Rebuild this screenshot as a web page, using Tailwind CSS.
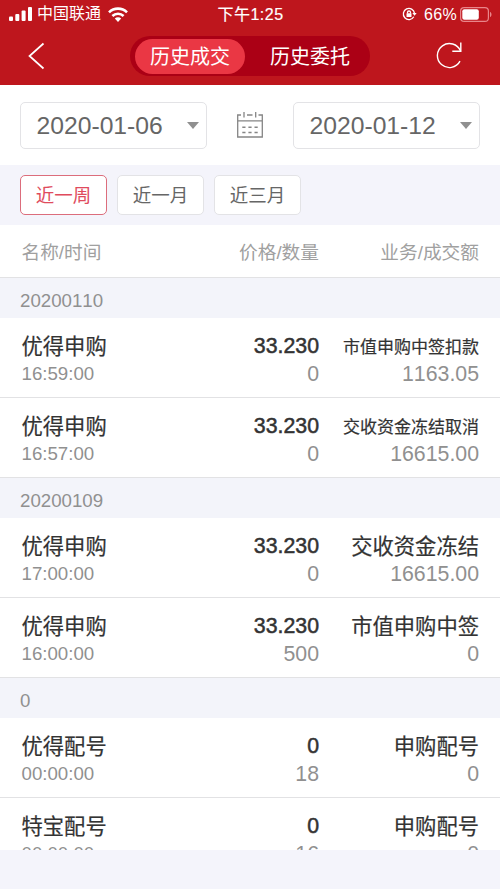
<!DOCTYPE html>
<html lang="zh-CN">
<head>
  <meta charset="UTF-8">
  <meta name="viewport" content="width=device-width, initial-scale=1.0">
  <title>历史成交</title>
  <script src="https://cdn.jsdelivr.net/npm/@tailwindcss/browser@4"></script>
</head>
<body class="h-[889px] overflow-hidden bg-[#f4f4fb] font-['Liberation_Sans','Noto_Sans_CJK_SC',sans-serif] text-[#333] [font-kerning:none]">

  <header class="h-[85px] bg-[#be161d] text-white">
    <!-- Status bar -->
    <div class="grid h-[28px] grid-cols-[1fr_auto_1fr] items-center pl-[9px] pr-2 text-base">
      <div class="flex items-center">
        <svg class="h-[15px] w-[23px]" viewBox="0 0 23 15" fill="currentColor">
          <rect x="0" y="9.500" width="4" height="4.500" rx="1"/>
          <rect x="6.300" y="7" width="4" height="7" rx="1"/>
          <rect x="12.600" y="3.500" width="4" height="10.500" rx="1"/>
          <rect x="19" y="0" width="4" height="14" rx="1"/>
        </svg>
        <span class="ml-[5px]">中国联通</span>
        <svg class="ml-[7px] h-[15px] w-5" viewBox="0 0 20 15" fill="none" stroke="currentColor" stroke-width="2.600">
          <path d="M1 5.300a12.800 12.800 0 0 1 18 0"/>
          <path d="M4.400 9a8 8 0 0 1 11.200 0"/>
          <path d="M10 15l-3.200-3.400a4.600 4.600 0 0 1 6.400 0z" fill="currentColor" stroke="none"/>
        </svg>
      </div>
      <span class="pt-px tracking-[0.500px] [-webkit-text-stroke:0.2px_#fff]">下午1:25</span>
      <div class="flex items-center justify-end">
        <svg class="h-[14px] w-[15px]" viewBox="0 0 15 14" fill="none" stroke="currentColor" stroke-width="1.300">
          <path d="M11.800 9.800a5.600 5.600 0 1 1 .7-3.500"/>
          <path d="M10.300 6h4.400l-2.200 2.800z" fill="currentColor" stroke="none"/>
          <rect x="4.500" y="6.300" width="5" height="3.700" rx=".5" fill="currentColor" stroke="none"/>
          <path d="M5.500 6.500v-1a1.500 1.500 0 0 1 3 0v1"/>
        </svg>
        <span class="ml-[7px] pt-px tracking-[0.300px]">66%</span>
        <svg class="ml-[3px] h-[15px] w-8" viewBox="0 0 32 15">
          <rect x=".6" y=".6" width="27.800" height="13.800" rx="3.500" fill="none" stroke="#e9858a" stroke-width="1.200"/>
          <rect x="2.300" y="2.300" width="16.500" height="10.400" rx="2" fill="#fff"/>
          <path d="M30 5c2 .5 2 4.500 0 5z" fill="#e9858a"/>
        </svg>
      </div>
    </div>

    <!-- Nav bar -->
    <div class="flex h-[56px] items-center pl-7">
      <svg class="h-[28px] w-[17px]" viewBox="0 0 17 28" fill="none" stroke="currentColor" stroke-width="1.700">
        <path d="M15.500 1.500L1.500 14l14 12.500"/>
      </svg>
      <div class="ml-[85px] flex h-10 w-[240px] items-center rounded-full bg-[#ab0015] pl-[5px] text-xl">
        <div class="flex h-[35px] w-[110px] items-center justify-center rounded-full bg-[#ea3744] pt-px">历史成交</div>
        <div class="ml-[10px] flex w-[110px] justify-center pt-px">历史委托</div>
      </div>
      <svg class="ml-[66px] h-[28px] w-[27px]" viewBox="0 0 27 28" fill="none" stroke="currentColor" stroke-width="1.400">
        <path d="M24 19.200A12 12 0 1 1 24.500 9"/>
        <path d="M24.800 .5v8.700h-8.500"/>
      </svg>
    </div>
  </header>

  <!-- Date range -->
  <div class="flex h-20 items-center justify-between bg-white px-5 text-[24.700px] text-[#666]">
    <div class="flex h-[47px] w-[187px] items-center justify-between rounded-[5px] border border-[#e3e3e6] pl-[15.500px] pr-[7px]">
      <span class="pt-0.5">2020-01-06</span>
      <svg class="h-[7px] w-3" viewBox="0 0 12 7" fill="#909090"><path d="M0 0h12L6 7z"/></svg>
    </div>
    <svg class="h-7 w-7" viewBox="0 0 28 28" fill="none" stroke="#858585" stroke-width="1.300">
      <path d="M5 4H1.700v22h24.600V4H22.500M11 4h5.500M1.700 9.800h24.600M8 1v5.500M19.700 1v5.500"/>
      <path d="M6.300 16.300h3.200M12.400 16.300h3.200M18.500 16.300h3.200M6.300 21.500h3.200M12.400 21.500h3.200M18.500 21.500h3.200" stroke-width="1.500"/>
    </svg>
    <div class="flex h-[47px] w-[187px] items-center justify-between rounded-[5px] border border-[#e3e3e6] pl-[15.500px] pr-[7px]">
      <span class="pt-0.5">2020-01-12</span>
      <svg class="h-[7px] w-3" viewBox="0 0 12 7" fill="#909090"><path d="M0 0h12L6 7z"/></svg>
    </div>
  </div>

  <!-- Quick ranges -->
  <div class="flex h-[60px] items-center gap-[10px] px-5 text-[18.500px] text-[#666]">
    <div class="flex h-10 w-[87px] items-center justify-center rounded-[5px] border border-[#dc6d7c] bg-white pt-0.5 text-[#e04b5d]">近一周</div>
    <div class="flex h-10 w-[87px] items-center justify-center rounded-[5px] border border-[#e3e3e6] bg-white pt-0.5">近一月</div>
    <div class="flex h-10 w-[87px] items-center justify-center rounded-[5px] border border-[#e3e3e6] bg-white pt-0.5">近三月</div>
  </div>

  <div class="grid h-[53px] grid-cols-[1fr_130px_160px] items-center border-b border-[#e2e2e4] bg-white pl-[21.500px] pr-[21px] pt-[5px] text-[18.700px] text-[#a0a0a0]">
    <span>名称/时间</span>
    <span class="text-right">价格/数量</span>
    <span class="text-right">业务/成交额</span>
  </div>

  <main id="records" class="h-[572px] overflow-hidden bg-white"></main>

<script>
const groups = [
  { date: '20200110', rows: [
    ['优得申购', '16:59:00', '33.230', '0', '市值申购中签扣款', '1163.05'],
    ['优得申购', '16:57:00', '33.230', '0', '交收资金冻结取消', '16615.00'],
  ]},
  { date: '20200109', rows: [
    ['优得申购', '17:00:00', '33.230', '0', '交收资金冻结', '16615.00'],
    ['优得申购', '16:00:00', '33.230', '500', '市值申购中签', '0'],
  ]},
  { date: '0', rows: [
    ['优得配号', '00:00:00', '0', '18', '申购配号', '0'],
    ['特宝配号', '00:00:00', '0', '16', '申购配号', '0'],
  ]},
];

// Long business names drop to a smaller size so they stay on one line
const bizSize = text => text.length > 6 ? 'text-[17px] pt-0.5' : 'text-[21.300px] pt-px';

document.getElementById('records').innerHTML = groups.map(group => `
  <div class="flex h-10 items-center bg-[#f3f4fa] pl-5 pt-1.5 text-[18.700px] text-[#909090]">${group.date}</div>
  ${group.rows.map(([name, time, price, count, biz, amount]) => `
    <div class="grid h-20 grid-cols-[1fr_100px_160px] border-b border-[#e2e2e4] pl-[21.500px] pr-[21px] pt-[14px] leading-7">
      <div>
        <p class="h-7 pt-px text-[21.300px] [-webkit-text-stroke:0.2px_#333]">${name}</p>
        <p class="text-[18.700px] text-[#909090]">${time}</p>
      </div>
      <div class="text-right text-[21.300px]">
        <p class="[-webkit-text-stroke:0.5px_#333]">${price}</p>
        <p class="text-[#909090]">${count}</p>
      </div>
      <div class="whitespace-nowrap text-right">
        <p class="h-7 [-webkit-text-stroke:0.2px_#333] ${bizSize(biz)}">${biz}</p>
        <p class="text-[21.300px] text-[#909090]">${amount}</p>
      </div>
    </div>
  `).join('')}
`).join('');
</script>

</body>
</html>
